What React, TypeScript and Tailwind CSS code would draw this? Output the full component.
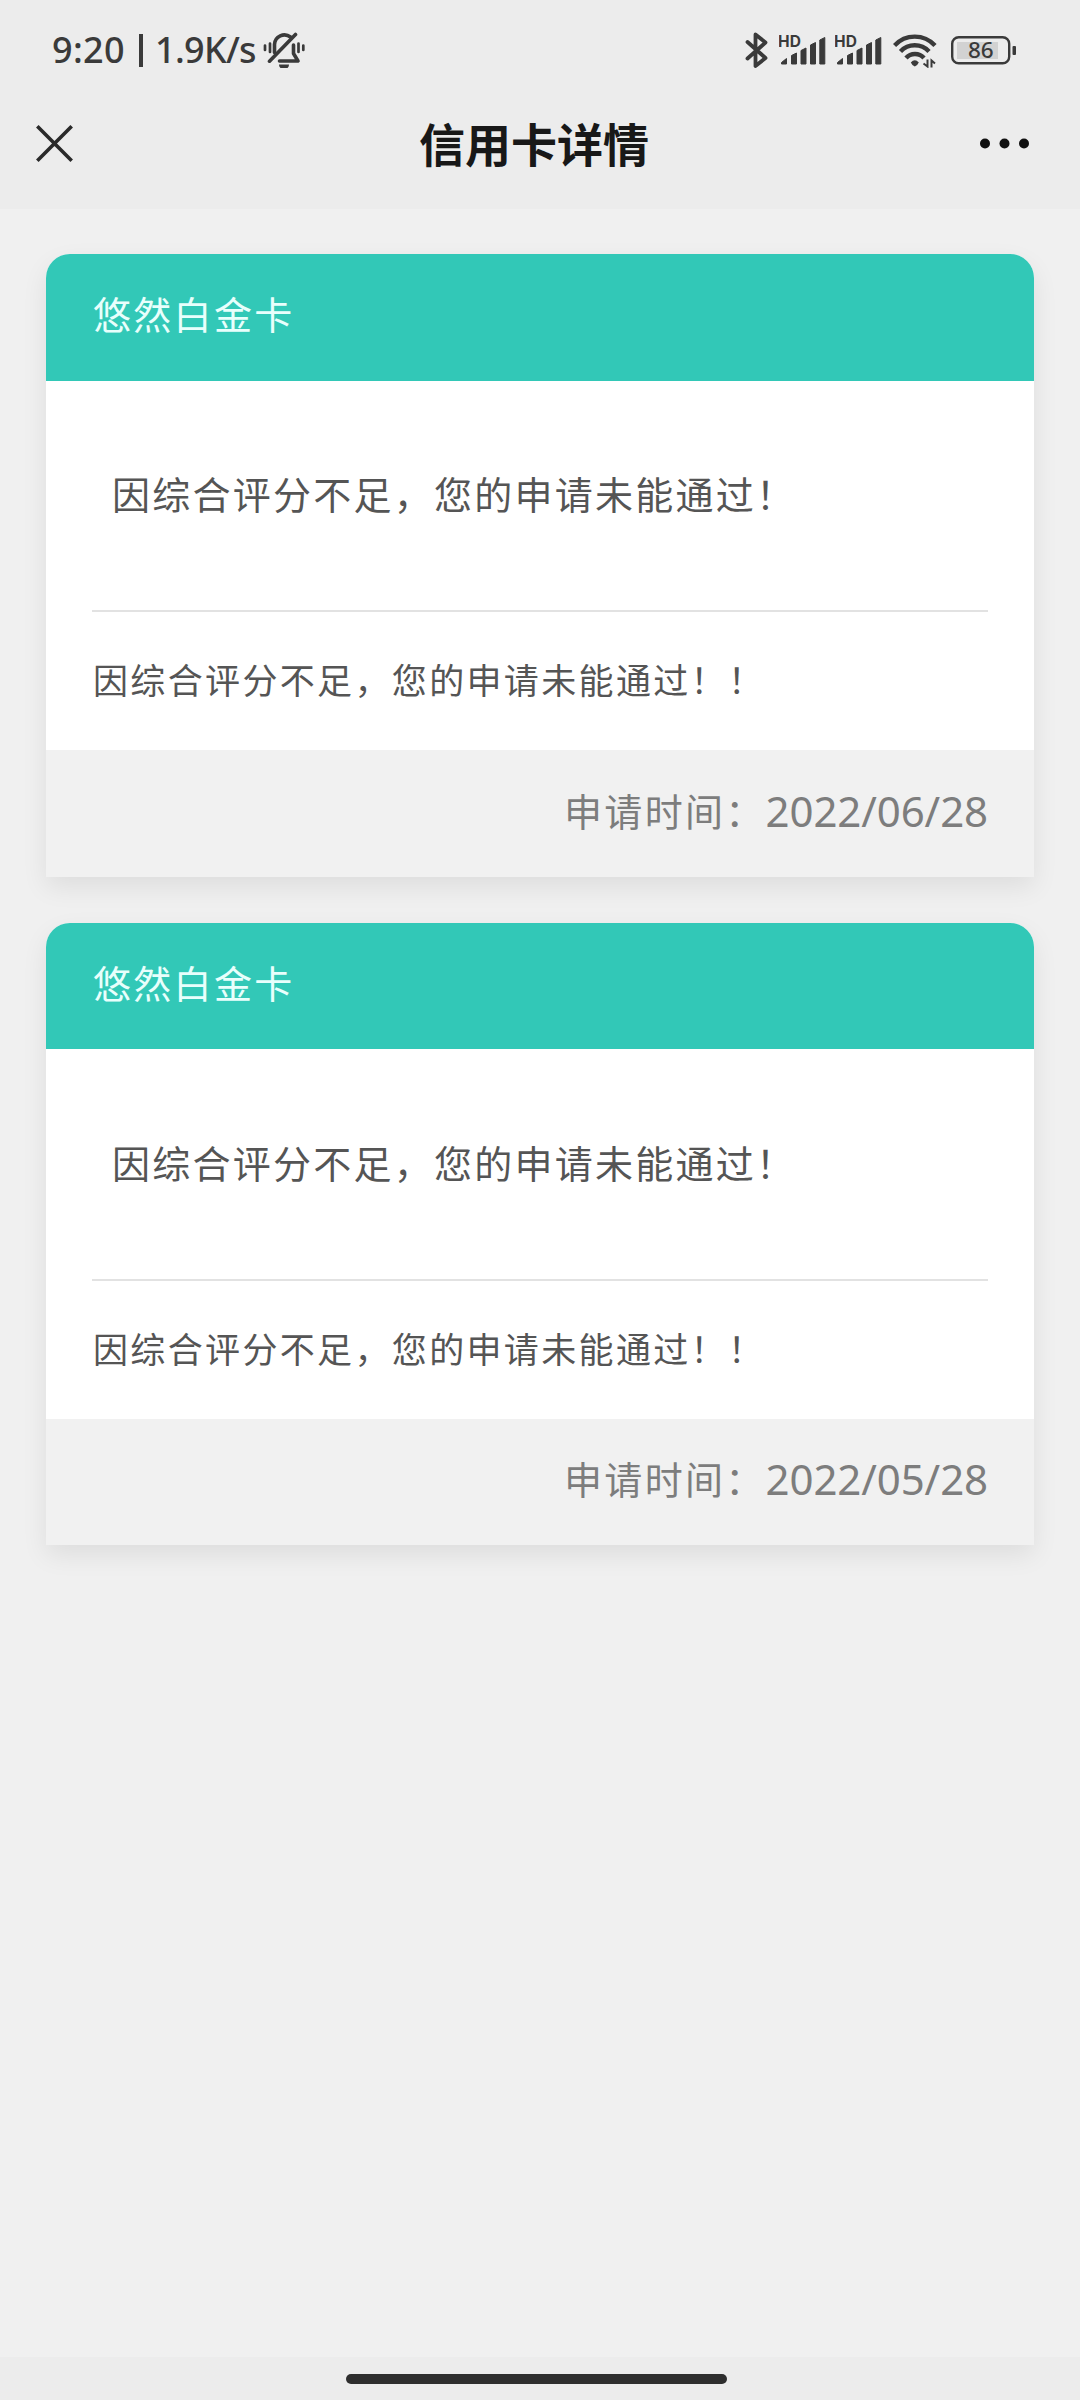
import React from 'react';

interface Application {
  id: number;
  cardName: string;
  message: string;
  remark: string;
  date: string;
}

const applications: Application[] = [
  {
    id: 1,
    cardName: '悠然白金卡',
    message: '因综合评分不足，您的申请未能通过！',
    remark: '因综合评分不足，您的申请未能通过！！',
    date: '2022/06/28',
  },
  {
    id: 2,
    cardName: '悠然白金卡',
    message: '因综合评分不足，您的申请未能通过！',
    remark: '因综合评分不足，您的申请未能通过！！',
    date: '2022/05/28',
  },
];

const MutedBellIcon = () => (
  <svg className="h-9 w-[44px]" viewBox="262 32 44 36" fill="none" stroke="#3a3a3a" strokeWidth="3.6" strokeLinecap="round" strokeLinejoin="round">
    <path d="M265 45.500v4.500M270 43.500v8.500M298.500 43.500v8.500M303.300 45.500v4.500" strokeWidth="2.700" />
    <path d="M274.500 52.500v-8a10 10 0 0 1 16-7.500" />
    <path d="M295.500 34.500L269.500 61.200" />
    <path d="M293.500 45v8.500l4.500 7.500H279.500" />
    <path d="M279 64.500h10a5 5 0 0 1-10 0z" fill="#3a3a3a" stroke="none" />
  </svg>
);

const BluetoothIcon = () => (
  <svg className="h-9 w-6" viewBox="744 31 24 36" fill="none" stroke="#3a3a3a" strokeWidth="3.800" strokeLinecap="round" strokeLinejoin="round">
    <path d="M747.500 41L765.500 57L755.500 65V33.500L765.500 41.500L747.500 57.500" />
  </svg>
);

const SignalIcon = () => (
  <svg className="h-9 w-12" viewBox="779 31 48 36" fill="#3a3a3a" stroke="#3a3a3a" strokeLinejoin="round">
    <text x="778" y="45.800" fontSize="15.500" fontWeight="700" fontFamily="Inter, sans-serif" textLength="23" stroke="none">
      HD
    </text>
    <path d="M781.500 63V61.500L786.500 57.500V63Z" />
    <path d="M791.500 63V54.500L796.500 52V63Z" />
    <path d="M801 63V49.500L806 47V63Z" />
    <path d="M810.500 63V44L815.500 41.500V63Z" />
    <path d="M819.800 63V39L824.800 36.500V63Z" />
  </svg>
);

const WifiIcon = () => (
  <svg className="h-9 w-11" viewBox="893 31 44 36" fill="none" stroke="#3a3a3a" strokeWidth="4.400">
    <path d="M894.500 44.500a27.500 27.500 0 0 1 40.500 0" />
    <path d="M900.500 50.500a19.500 19.500 0 0 1 28.500 0" />
    <path d="M906 57a12 12 0 0 1 18 0" />
    <path d="M910.800 61.500q4-4.500 8 0q-1 2.500-4 4q-3-1.500-4-4z" fill="#3a3a3a" stroke="none" />
    <path d="M927.500 58.500v7l-4-3M931.500 66.500v-7l3.500 3" strokeWidth="2" />
  </svg>
);

const BatteryIcon = () => (
  <svg className="h-9 w-[66px]" viewBox="950 31 66 36" fill="none">
    <rect x="957" y="41" width="41" height="17" fill="#d2d2d2" />
    <rect x="952.200" y="36.200" width="57" height="26" rx="6.500" stroke="#3a3a3a" strokeWidth="2.400" />
    <rect x="1012.500" y="45" width="3.500" height="9" rx="1" fill="#3a3a3a" />
    <text x="980.800" y="57.200" fontSize="22.500" fontWeight="500" fontFamily="'Noto Sans', sans-serif" textAnchor="middle" fill="#3a3a3a">
      86
    </text>
  </svg>
);

const StatusBar = () => (
  <div className="flex h-[100px] items-center justify-between pl-[52px] pr-16 text-[#3a3a3a]">
    <div className="flex items-center font-['Noto_Sans',sans-serif] text-[36px] font-medium">
      <span className="w-[84px] tracking-[0.3px]">9:20</span>
      <span className="ml-[3px] h-[33px] w-1 bg-[#3a3a3a]" />
      <span className="ml-3 w-[107px] whitespace-nowrap tracking-[-0.7px]">1.9K/s</span>
      <MutedBellIcon />
    </div>
    <div className="flex items-center">
      <BluetoothIcon />
      <span className="ml-[11px] flex gap-2">
        <SignalIcon />
        <SignalIcon />
      </span>
      <span className="ml-2.5 flex gap-[13px]">
        <WifiIcon />
        <BatteryIcon />
      </span>
    </div>
  </div>
);

const NavBar = () => (
  <div className="flex h-[109px] items-start justify-between pl-9 pr-[51px]">
    <svg className="mt-[25px] h-[37px] w-[37px]" viewBox="0 0 37 37" stroke="#2a2a2a" strokeWidth="3.600">
      <path d="M1.300 1.300L35.700 35.700M35.700 1.300L1.300 35.700" />
    </svg>
    <h1 className="ml-[15px] mt-2.5 text-[46px] leading-[64px] font-bold text-[#181818]">信用卡详情</h1>
    <svg className="mt-[38px] h-[11px] w-[49px]" viewBox="0 0 49 11" fill="#111111">
      <circle cx="5" cy="5.500" r="5" />
      <circle cx="24.500" cy="5.500" r="5" />
      <circle cx="44" cy="5.500" r="5" />
    </svg>
  </div>
);

const ApplicationCard: React.FC<{ item: Application }> = ({ item }) => {
  return (
    <div className="overflow-hidden rounded-t-[24px] bg-white shadow-[0_10px_26px_rgba(0,0,0,0.08)]">
      <div className="flex h-[126.5px] items-center bg-[#32c8b7] px-[47px] pb-2.5 text-[38px] tracking-[2.3px] text-[#e8fffc]">
        {item.cardName}
      </div>
      <div className="px-[46px]">
        <div className="flex h-[231.5px] items-center whitespace-nowrap border-b-2 border-[#e2e2e2] pb-1.5 pl-5 text-[38px] tracking-[2.250px] text-[#555555]">
          {item.message}
        </div>
        <div className="flex h-[138px] items-center whitespace-nowrap pb-1 pl-px text-[35px] tracking-[2.350px] text-[#555555]">
          {item.remark}
        </div>
      </div>
      <div className="flex h-[126.4px] items-center justify-end bg-[#f1f1f1] pb-2 pr-[46px] text-[#7d7d7d]">
        <p className="text-[38px] leading-[56px] tracking-[2.3px]">
          申请时间：
          <span className="relative top-px font-['Noto_Sans',sans-serif] text-[42px] tracking-[-0.1px]">{item.date}</span>
        </p>
      </div>
    </div>
  );
};

const App: React.FC = () => {
  return (
    <div className="flex h-[2400px] w-[1080px] flex-col bg-[#f0f0f0] font-['Noto_Sans_CJK_SC',sans-serif]">
      <header className="bg-[#ececec]">
        <StatusBar />
        <NavBar />
      </header>
      <main className="flex flex-1 flex-col gap-[46px] px-[46px] pt-[45.4px]">
        {applications.map((item) => (
          <ApplicationCard key={item.id} item={item} />
        ))}
      </main>
      <footer className="flex h-[43px] justify-center bg-[#ececec] pt-[17px]">
        <div className="-ml-[7px] h-2.5 w-[381px] rounded-full bg-[#2e2e2e]" />
      </footer>
    </div>
  );
};

export default App;
